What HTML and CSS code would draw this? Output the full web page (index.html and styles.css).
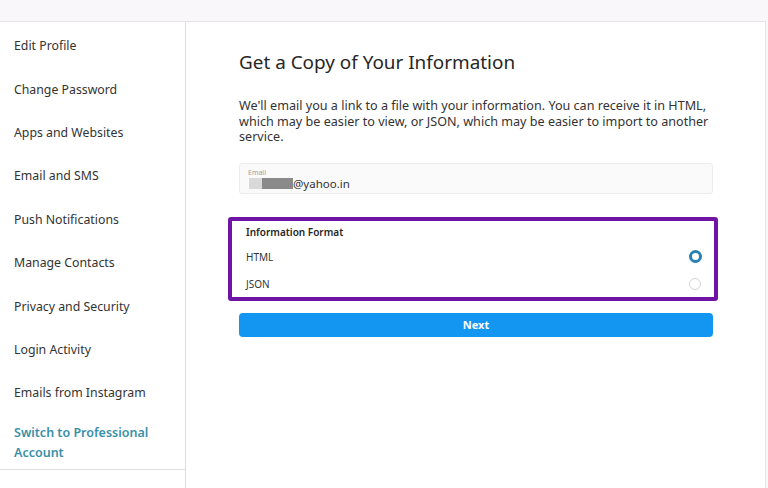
FILE: index.html
```html
<!DOCTYPE html>
<html>
<head>
<meta charset="utf-8">
<link rel="stylesheet" href="styles.css">
</head>
<body>
<div class="topbar"></div>
<div class="page">
  <nav class="sidebar">
    <ul class="menu">
      <li class="item">Edit Profile</li>
      <li class="item">Change Password</li>
      <li class="item">Apps and Websites</li>
      <li class="item">Email and SMS</li>
      <li class="item">Push Notifications</li>
      <li class="item">Manage Contacts</li>
      <li class="item">Privacy and Security</li>
      <li class="item">Login Activity</li>
      <li class="item">Emails from Instagram</li>
      <li class="item pro">Switch to Professional Account</li>
    </ul>
  </nav>
  <main class="content">
    <h1 class="title">Get a Copy of Your Information</h1>
    <p class="desc">We'll email you a link to a file with your information. You can receive it in HTML, which may be easier to view, or JSON, which may be easier to import to another service.</p>
    <div class="field">
      <div class="field-label">Email</div>
      <div class="field-value"><span class="blur-a"></span><span class="blur-b"></span>@yahoo.in</div>
    </div>
    <div class="format">
      <div class="format-title">Information Format</div>
      <div class="option"><span>HTML</span><span class="radio on"></span></div>
      <div class="option last"><span>JSON</span><span class="radio"></span></div>
    </div>
    <button class="next">Next</button>
  </main>
</div>
</body>
</html>
```
FILE: styles.css
```css
html, body {
  margin: 0;
  padding: 0;
  height: 100%;
}
body {
  background: #f9f7fa;
  font-family: "Noto Sans", "Open Sans", sans-serif;
  color: #262626;
  display: flex;
  flex-direction: column;
  overflow: hidden;
}
.topbar {
  height: 21px;
  flex: none;
}
.page {
  flex: 1;
  display: flex;
  border-top: 1px solid #e6e2e8;
  margin-right: 2px;
}
.sidebar {
  width: 185px;
  flex: none;
  background: #fff;
  border-right: 1px solid #dedede;
}
.menu {
  list-style: none;
  margin: 0;
  padding: 2px 0 0 0;
  border-bottom: 1px solid #dedede;
}
.item {
  height: 43.4px;
  display: flex;
  align-items: center;
  padding-left: 14px;
  font-size: 12.3px;
  color: #333;
}
.item.pro {
  height: auto;
  display: block;
  padding: 8px 30px 6px 14px;
  line-height: 20px;
  font-size: 12.5px;
  font-weight: 600;
  color: #3a90a8;
}
.content {
  flex: 1;
  background: #fff;
  border-right: 1px solid #e4e4e4;
  padding: 28px 52px 0 53px;
}
.title {
  margin: 0;
  font-size: 18.9px;
  line-height: 24px;
  font-weight: 400;
  color: #262626;
}
.desc {
  margin: 24px 0 0 0;
  font-size: 12.6px;
  line-height: 15.5px;
  color: #333;
}
.field {
  margin-top: 18px;
  height: 31px;
  box-sizing: border-box;
  background: #fafafa;
  border: 1px solid #ececec;
  border-radius: 3px;
  padding: 4px 8px 0 8px;
}
.field-label {
  font-size: 7px;
  line-height: 9px;
  color: #a0a0a0;
}
.field-value {
  display: flex;
  align-items: center;
  font-size: 11.5px;
  line-height: 14px;
  color: #333;
  padding-left: 1px;
}
.blur-a {
  width: 13px;
  height: 11px;
  background: #d9d9d9;
}
.blur-b {
  width: 31px;
  height: 11px;
  background: #8a8a8a;
}
.format {
  margin: 23px -5px 0 -11px;
  border: 4px solid #7014a6;
  border-radius: 3px;
  padding: 4px 12px 0 14px;
  background: #fff;
}
.format-title {
  font-size: 10px;
  line-height: 14px;
  font-weight: 600;
  color: #262626;
  margin-bottom: 4px;
}
.option {
  height: 28px;
  display: flex;
  align-items: center;
  justify-content: space-between;
  font-size: 10px;
  color: #333;
}
.option.last {
  height: 26px;
}
.radio {
  width: 12px;
  height: 12px;
  box-sizing: border-box;
  border-radius: 50%;
  border: 1px solid #d4d4d4;
  margin-right: 1px;
}
.radio.on {
  border: 3.5px solid #2a80b2;
  width: 13px;
  height: 13px;
  margin-right: 0;
}
.next {
  display: block;
  width: 100%;
  margin-top: 12px;
  height: 24px;
  border: none;
  border-radius: 4px;
  background: #1396f2;
  color: #fff;
  font-family: "Noto Sans", "Open Sans", sans-serif;
  font-size: 11px;
  font-weight: 700;
  padding: 0;
}
```
